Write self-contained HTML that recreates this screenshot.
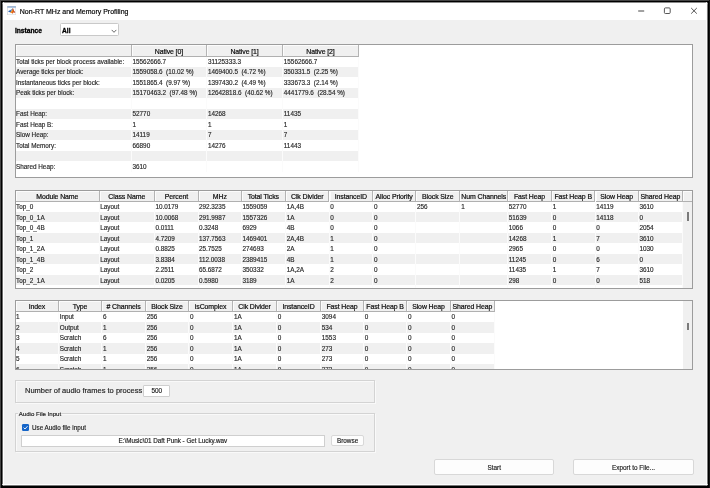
<!DOCTYPE html>
<html lang="en"><head><meta charset="utf-8"><title>Non-RT MHz and Memory Profiling</title>
<style>
html,body{margin:0;padding:0;}
body{-webkit-text-stroke:0.16px;width:710px;height:488px;background:#000;overflow:hidden;position:relative;font-family:"Liberation Sans",sans-serif;}
.win{will-change:transform;position:absolute;left:2px;top:2px;width:706px;height:484px;background:#f0f0f0;border-radius:3px;overflow:hidden;}
.edge{position:absolute;background:#fff;}
.titlebar{position:absolute;left:0;top:0;width:706px;height:18px;background:#fff;}
.title{position:absolute;left:17.8px;top:1px;height:18px;line-height:17.6px;font-size:7.0px;color:#000;white-space:nowrap;}
.abs{position:absolute;white-space:nowrap;}
.tbl{position:absolute;background:#fff;border:1px solid #9c9c9c;box-sizing:border-box;overflow:hidden;}
.tbl>*{position:absolute;}
.th{top:0;box-sizing:border-box;background:#f0f0f0;border-right:1px solid #b4b4b4;border-bottom:1px solid #b0b0b0;box-shadow:inset 1px 1px 0 #fcfcfc;font-size:6.95px;letter-spacing:-0.1px;color:#0c0c0c;-webkit-text-stroke:0.2px;text-align:center;white-space:nowrap;overflow:hidden;}
.tr{position:absolute;}
.td{position:absolute;height:9px;line-height:9px;box-sizing:border-box;font-size:6.36px;color:#2a2a2a;white-space:pre;overflow:hidden;}
.sb{background:#f0f0f0;}
.vs{width:1px;background:#fbfbfb;}
.thumb{width:2px;background:#7a7a7a;}
.panel{position:absolute;box-sizing:border-box;border:1px solid #d3d3d3;box-shadow:inset 1px 1px 0 #f9f9f9,1px 1px 0 #f9f9f9;}
.btn{position:absolute;box-sizing:border-box;background:#fdfdfd;border:1px solid #d8d8d8;border-radius:2px;font-size:6.4px;color:#222;text-align:center;white-space:nowrap;}
.edit{position:absolute;box-sizing:border-box;background:#fff;border:1px solid #cfcfcf;font-size:6.4px;color:#222;text-align:center;white-space:nowrap;}
</style></head><body>
<div class="abs" style="left:0;top:0;width:1px;height:488px;background:#444"></div>
<div class="abs" style="left:0;top:0;width:710px;height:1px;background:#444"></div>
<div class="abs" style="left:709px;top:0;width:1px;height:488px;background:#151515"></div>
<div class="win">
<div class="titlebar">
<div class="edge" style="left:0;top:0;width:706px;height:1px;background:#8a8a8a"></div>
<svg class="abs" style="left:5.2px;top:4.1px" width="9.3" height="9.3" viewBox="0 0 9.3 9.3">
<rect x="0.3" y="0.3" width="8.7" height="8.7" rx="0.4" fill="#fdfdfd" stroke="#b9bec6" stroke-width="0.6"/>
<rect x="0.4" y="0.4" width="8.5" height="1.2" fill="#7c9fca"/>
<g transform="translate(4.65 4.9) scale(1.12) translate(-4.65 -4.7)">
<path d="M1.3 5.0 L3.6 4.0 L4.7 4.9 L3.4 6.2 Z" fill="#2a63b4"/>
<path d="M3.6 4.0 L5.6 2.3 L5.9 3.3 L4.7 4.9 Z" fill="#5b9bd5"/>
<path d="M3.4 6.2 L4.7 4.9 L5.8 2.2 L6.7 4.6 L7.9 6.6 L6.6 6.0 L5.3 7.3 L4.5 6.4 Z" fill="#dd5a1c"/>
<path d="M5.8 2.3 L6.7 4.6 L7.9 6.6 L6.8 5.7 L6.2 4.2 Z" fill="#9c2a18"/>
<path d="M3.4 6.2 L4.7 4.9 L5.5 3.2 L5.3 5.6 L4.5 6.4 Z" fill="#f6a21e"/>
</g>
</svg>
<div class="title">Non-RT MHz and Memory Profiling</div>
<svg class="abs" style="left:634px;top:4px" width="64" height="11" viewBox="0 0 64 11">
<path d="M2.2 5 H8.2" stroke="#444" stroke-width="1" fill="none"/>
<rect x="28.4" y="1.9" width="5.8" height="5.6" rx="1" fill="none" stroke="#444" stroke-width="0.9"/>
<path d="M55.2 2 L60.8 7.6 M60.8 2 L55.2 7.6" stroke="#333" stroke-width="0.85" fill="none"/>
</svg>
</div>
<div class="abs" style="left:12.9px;top:23.6px;font-size:6.7px;font-weight:bold;color:#000;-webkit-text-stroke:0.3px;line-height:9px">Instance</div>
<div class="abs" style="left:58.4px;top:21.2px;width:58.4px;height:13px;box-sizing:border-box;background:#fff;border:1px solid #c9c9c9;border-radius:1.5px;"></div>
<div class="abs" style="left:60.1px;top:23.8px;font-size:6.6px;font-weight:bold;color:#000;-webkit-text-stroke:0.3px;line-height:9px">All</div>
<svg class="abs" style="left:108.8px;top:26.6px" width="6" height="5" viewBox="0 0 6 5"><path d="M0.7 0.9 L3 3.3 L5.3 0.9" stroke="#444" stroke-width="0.8" fill="none"/></svg>

<div class="tbl" style="left:13px;top:42px;width:678px;height:134px">
<div class="tr" style="top:11.40px;left:0;width:342.50px;height:10.47px;background:#fff"></div>
<span class="td" style="left:0.00px;top:12px;width:115.20px;padding-left:0px">Total ticks per block process available:</span>
<span class="td" style="left:115.20px;top:12px;width:75.40px;padding-left:1.3px">15562666.7</span>
<span class="td" style="left:190.60px;top:12px;width:75.90px;padding-left:1.3px">31125333.3</span>
<span class="td" style="left:266.50px;top:12px;width:76.00px;padding-left:1.3px">15562666.7</span>
<div class="tr" style="top:21.87px;left:0;width:342.50px;height:10.47px;background:#f0f0f0"></div>
<span class="td" style="left:0.00px;top:22px;width:115.20px;padding-left:0px">Average ticks per block:</span>
<span class="td" style="left:115.20px;top:22px;width:75.40px;padding-left:1.3px">1559058.6  (10.02 %)</span>
<span class="td" style="left:190.60px;top:22px;width:75.90px;padding-left:1.3px">1469400.5  (4.72 %)</span>
<span class="td" style="left:266.50px;top:22px;width:76.00px;padding-left:1.3px">350331.5  (2.25 %)</span>
<div class="tr" style="top:32.34px;left:0;width:342.50px;height:10.47px;background:#fff"></div>
<span class="td" style="left:0.00px;top:33px;width:115.20px;padding-left:0px">Instantaneous ticks per block:</span>
<span class="td" style="left:115.20px;top:33px;width:75.40px;padding-left:1.3px">1551865.4  (9.97 %)</span>
<span class="td" style="left:190.60px;top:33px;width:75.90px;padding-left:1.3px">1397430.2  (4.49 %)</span>
<span class="td" style="left:266.50px;top:33px;width:76.00px;padding-left:1.3px">333673.3  (2.14 %)</span>
<div class="tr" style="top:42.81px;left:0;width:342.50px;height:10.47px;background:#f0f0f0"></div>
<span class="td" style="left:0.00px;top:43px;width:115.20px;padding-left:0px">Peak ticks per block:</span>
<span class="td" style="left:115.20px;top:43px;width:75.40px;padding-left:1.3px">15170463.2  (97.48 %)</span>
<span class="td" style="left:190.60px;top:43px;width:75.90px;padding-left:1.3px">12642818.6  (40.62 %)</span>
<span class="td" style="left:266.50px;top:43px;width:76.00px;padding-left:1.3px">4441779.6  (28.54 %)</span>
<div class="tr" style="top:53.28px;left:0;width:342.50px;height:10.47px;background:#fff"></div>
<div class="tr" style="top:63.75px;left:0;width:342.50px;height:10.47px;background:#f0f0f0"></div>
<span class="td" style="left:0.00px;top:64px;width:115.20px;padding-left:0px">Fast Heap:</span>
<span class="td" style="left:115.20px;top:64px;width:75.40px;padding-left:1.3px">52770</span>
<span class="td" style="left:190.60px;top:64px;width:75.90px;padding-left:1.3px">14268</span>
<span class="td" style="left:266.50px;top:64px;width:76.00px;padding-left:1.3px">11435</span>
<div class="tr" style="top:74.22px;left:0;width:342.50px;height:10.47px;background:#fff"></div>
<span class="td" style="left:0.00px;top:75px;width:115.20px;padding-left:0px">Fast Heap B:</span>
<span class="td" style="left:115.20px;top:75px;width:75.40px;padding-left:1.3px">1</span>
<span class="td" style="left:190.60px;top:75px;width:75.90px;padding-left:1.3px">1</span>
<span class="td" style="left:266.50px;top:75px;width:76.00px;padding-left:1.3px">1</span>
<div class="tr" style="top:84.69px;left:0;width:342.50px;height:10.47px;background:#f0f0f0"></div>
<span class="td" style="left:0.00px;top:85px;width:115.20px;padding-left:0px">Slow Heap:</span>
<span class="td" style="left:115.20px;top:85px;width:75.40px;padding-left:1.3px">14119</span>
<span class="td" style="left:190.60px;top:85px;width:75.90px;padding-left:1.3px">7</span>
<span class="td" style="left:266.50px;top:85px;width:76.00px;padding-left:1.3px">7</span>
<div class="tr" style="top:95.16px;left:0;width:342.50px;height:10.47px;background:#fff"></div>
<span class="td" style="left:0.00px;top:96px;width:115.20px;padding-left:0px">Total Memory:</span>
<span class="td" style="left:115.20px;top:96px;width:75.40px;padding-left:1.3px">66890</span>
<span class="td" style="left:190.60px;top:96px;width:75.90px;padding-left:1.3px">14276</span>
<span class="td" style="left:266.50px;top:96px;width:76.00px;padding-left:1.3px">11443</span>
<div class="tr" style="top:105.63px;left:0;width:342.50px;height:10.47px;background:#f0f0f0"></div>
<div class="tr" style="top:116.10px;left:0;width:342.50px;height:10.47px;background:#fff"></div>
<span class="td" style="left:0.00px;top:117px;width:115.20px;padding-left:0px">Shared Heap:</span>
<span class="td" style="left:115.20px;top:117px;width:75.40px;padding-left:1.3px">3610</span>
<div class="vs" style="left:114.70px;top:12px;height:114.57px"></div>
<div class="vs" style="left:190.10px;top:12px;height:114.57px"></div>
<div class="vs" style="left:266.00px;top:12px;height:114.57px"></div>
<div class="vs" style="left:342.00px;top:12px;height:114.57px"></div>
<div class="th" style="left:0.00px;width:115.70px;height:12px;line-height:13.00px"></div>
<div class="th" style="left:115.70px;width:75.40px;height:12px;line-height:13.00px">Native [0]</div>
<div class="th" style="left:191.10px;width:75.90px;height:12px;line-height:13.00px">Native [1]</div>
<div class="th" style="left:267.00px;width:76.00px;height:12px;line-height:13.00px">Native [2]</div>
</div>
<div class="tbl" style="left:13px;top:188px;width:678px;height:99px">
<div class="tr" style="top:10.40px;left:0;width:666.60px;height:10.5px;background:#fff"></div>
<span class="td" style="left:0.00px;top:11px;width:83.00px;padding-left:0px">Top_0</span>
<span class="td" style="left:83.00px;top:11px;width:55.50px;padding-left:1.3px">Layout</span>
<span class="td" style="left:138.50px;top:11px;width:43.90px;padding-left:0.9px">10.0179</span>
<span class="td" style="left:182.40px;top:11px;width:42.80px;padding-left:0.5px">292.3235</span>
<span class="td" style="left:225.20px;top:11px;width:44.20px;padding-left:1.3px">1559059</span>
<span class="td" style="left:269.40px;top:11px;width:43.60px;padding-left:1.3px">1A,4B</span>
<span class="td" style="left:313.00px;top:11px;width:43.70px;padding-left:1.3px">0</span>
<span class="td" style="left:356.70px;top:11px;width:42.90px;padding-left:1.3px">0</span>
<span class="td" style="left:399.60px;top:11px;width:44.30px;padding-left:1.3px">256</span>
<span class="td" style="left:443.90px;top:11px;width:47.60px;padding-left:1.3px">1</span>
<span class="td" style="left:491.50px;top:11px;width:43.90px;padding-left:1.3px">52770</span>
<span class="td" style="left:535.40px;top:11px;width:43.60px;padding-left:1.3px">1</span>
<span class="td" style="left:579.00px;top:11px;width:43.20px;padding-left:1.3px">14119</span>
<span class="td" style="left:622.20px;top:11px;width:44.40px;padding-left:1.3px">3610</span>
<div class="tr" style="top:20.90px;left:0;width:666.60px;height:10.5px;background:#f0f0f0"></div>
<span class="td" style="left:0.00px;top:22px;width:83.00px;padding-left:0px">Top_0_1A</span>
<span class="td" style="left:83.00px;top:22px;width:55.50px;padding-left:1.3px">Layout</span>
<span class="td" style="left:138.50px;top:22px;width:43.90px;padding-left:0.9px">10.0068</span>
<span class="td" style="left:182.40px;top:22px;width:42.80px;padding-left:0.5px">291.9987</span>
<span class="td" style="left:225.20px;top:22px;width:44.20px;padding-left:1.3px">1557326</span>
<span class="td" style="left:269.40px;top:22px;width:43.60px;padding-left:1.3px">1A</span>
<span class="td" style="left:313.00px;top:22px;width:43.70px;padding-left:1.3px">0</span>
<span class="td" style="left:356.70px;top:22px;width:42.90px;padding-left:1.3px">0</span>
<span class="td" style="left:491.50px;top:22px;width:43.90px;padding-left:1.3px">51639</span>
<span class="td" style="left:535.40px;top:22px;width:43.60px;padding-left:1.3px">0</span>
<span class="td" style="left:579.00px;top:22px;width:43.20px;padding-left:1.3px">14118</span>
<span class="td" style="left:622.20px;top:22px;width:44.40px;padding-left:1.3px">0</span>
<div class="tr" style="top:31.40px;left:0;width:666.60px;height:10.5px;background:#fff"></div>
<span class="td" style="left:0.00px;top:32px;width:83.00px;padding-left:0px">Top_0_4B</span>
<span class="td" style="left:83.00px;top:32px;width:55.50px;padding-left:1.3px">Layout</span>
<span class="td" style="left:138.50px;top:32px;width:43.90px;padding-left:0.9px">0.0111</span>
<span class="td" style="left:182.40px;top:32px;width:42.80px;padding-left:0.5px">0.3248</span>
<span class="td" style="left:225.20px;top:32px;width:44.20px;padding-left:1.3px">6929</span>
<span class="td" style="left:269.40px;top:32px;width:43.60px;padding-left:1.3px">4B</span>
<span class="td" style="left:313.00px;top:32px;width:43.70px;padding-left:1.3px">0</span>
<span class="td" style="left:356.70px;top:32px;width:42.90px;padding-left:1.3px">0</span>
<span class="td" style="left:491.50px;top:32px;width:43.90px;padding-left:1.3px">1066</span>
<span class="td" style="left:535.40px;top:32px;width:43.60px;padding-left:1.3px">0</span>
<span class="td" style="left:579.00px;top:32px;width:43.20px;padding-left:1.3px">0</span>
<span class="td" style="left:622.20px;top:32px;width:44.40px;padding-left:1.3px">2054</span>
<div class="tr" style="top:41.90px;left:0;width:666.60px;height:10.5px;background:#f0f0f0"></div>
<span class="td" style="left:0.00px;top:43px;width:83.00px;padding-left:0px">Top_1</span>
<span class="td" style="left:83.00px;top:43px;width:55.50px;padding-left:1.3px">Layout</span>
<span class="td" style="left:138.50px;top:43px;width:43.90px;padding-left:0.9px">4.7209</span>
<span class="td" style="left:182.40px;top:43px;width:42.80px;padding-left:0.5px">137.7563</span>
<span class="td" style="left:225.20px;top:43px;width:44.20px;padding-left:1.3px">1469401</span>
<span class="td" style="left:269.40px;top:43px;width:43.60px;padding-left:1.3px">2A,4B</span>
<span class="td" style="left:313.00px;top:43px;width:43.70px;padding-left:1.3px">1</span>
<span class="td" style="left:356.70px;top:43px;width:42.90px;padding-left:1.3px">0</span>
<span class="td" style="left:491.50px;top:43px;width:43.90px;padding-left:1.3px">14268</span>
<span class="td" style="left:535.40px;top:43px;width:43.60px;padding-left:1.3px">1</span>
<span class="td" style="left:579.00px;top:43px;width:43.20px;padding-left:1.3px">7</span>
<span class="td" style="left:622.20px;top:43px;width:44.40px;padding-left:1.3px">3610</span>
<div class="tr" style="top:52.40px;left:0;width:666.60px;height:10.5px;background:#fff"></div>
<span class="td" style="left:0.00px;top:53px;width:83.00px;padding-left:0px">Top_1_2A</span>
<span class="td" style="left:83.00px;top:53px;width:55.50px;padding-left:1.3px">Layout</span>
<span class="td" style="left:138.50px;top:53px;width:43.90px;padding-left:0.9px">0.8825</span>
<span class="td" style="left:182.40px;top:53px;width:42.80px;padding-left:0.5px">25.7525</span>
<span class="td" style="left:225.20px;top:53px;width:44.20px;padding-left:1.3px">274693</span>
<span class="td" style="left:269.40px;top:53px;width:43.60px;padding-left:1.3px">2A</span>
<span class="td" style="left:313.00px;top:53px;width:43.70px;padding-left:1.3px">1</span>
<span class="td" style="left:356.70px;top:53px;width:42.90px;padding-left:1.3px">0</span>
<span class="td" style="left:491.50px;top:53px;width:43.90px;padding-left:1.3px">2965</span>
<span class="td" style="left:535.40px;top:53px;width:43.60px;padding-left:1.3px">0</span>
<span class="td" style="left:579.00px;top:53px;width:43.20px;padding-left:1.3px">0</span>
<span class="td" style="left:622.20px;top:53px;width:44.40px;padding-left:1.3px">1030</span>
<div class="tr" style="top:62.90px;left:0;width:666.60px;height:10.5px;background:#f0f0f0"></div>
<span class="td" style="left:0.00px;top:64px;width:83.00px;padding-left:0px">Top_1_4B</span>
<span class="td" style="left:83.00px;top:64px;width:55.50px;padding-left:1.3px">Layout</span>
<span class="td" style="left:138.50px;top:64px;width:43.90px;padding-left:0.9px">3.8384</span>
<span class="td" style="left:182.40px;top:64px;width:42.80px;padding-left:0.5px">112.0038</span>
<span class="td" style="left:225.20px;top:64px;width:44.20px;padding-left:1.3px">2389415</span>
<span class="td" style="left:269.40px;top:64px;width:43.60px;padding-left:1.3px">4B</span>
<span class="td" style="left:313.00px;top:64px;width:43.70px;padding-left:1.3px">1</span>
<span class="td" style="left:356.70px;top:64px;width:42.90px;padding-left:1.3px">0</span>
<span class="td" style="left:491.50px;top:64px;width:43.90px;padding-left:1.3px">11245</span>
<span class="td" style="left:535.40px;top:64px;width:43.60px;padding-left:1.3px">0</span>
<span class="td" style="left:579.00px;top:64px;width:43.20px;padding-left:1.3px">6</span>
<span class="td" style="left:622.20px;top:64px;width:44.40px;padding-left:1.3px">0</span>
<div class="tr" style="top:73.40px;left:0;width:666.60px;height:10.5px;background:#fff"></div>
<span class="td" style="left:0.00px;top:74px;width:83.00px;padding-left:0px">Top_2</span>
<span class="td" style="left:83.00px;top:74px;width:55.50px;padding-left:1.3px">Layout</span>
<span class="td" style="left:138.50px;top:74px;width:43.90px;padding-left:0.9px">2.2511</span>
<span class="td" style="left:182.40px;top:74px;width:42.80px;padding-left:0.5px">65.6872</span>
<span class="td" style="left:225.20px;top:74px;width:44.20px;padding-left:1.3px">350332</span>
<span class="td" style="left:269.40px;top:74px;width:43.60px;padding-left:1.3px">1A,2A</span>
<span class="td" style="left:313.00px;top:74px;width:43.70px;padding-left:1.3px">2</span>
<span class="td" style="left:356.70px;top:74px;width:42.90px;padding-left:1.3px">0</span>
<span class="td" style="left:491.50px;top:74px;width:43.90px;padding-left:1.3px">11435</span>
<span class="td" style="left:535.40px;top:74px;width:43.60px;padding-left:1.3px">1</span>
<span class="td" style="left:579.00px;top:74px;width:43.20px;padding-left:1.3px">7</span>
<span class="td" style="left:622.20px;top:74px;width:44.40px;padding-left:1.3px">3610</span>
<div class="tr" style="top:83.90px;left:0;width:666.60px;height:10.5px;background:#f0f0f0"></div>
<span class="td" style="left:0.00px;top:85px;width:83.00px;padding-left:0px">Top_2_1A</span>
<span class="td" style="left:83.00px;top:85px;width:55.50px;padding-left:1.3px">Layout</span>
<span class="td" style="left:138.50px;top:85px;width:43.90px;padding-left:0.9px">0.0205</span>
<span class="td" style="left:182.40px;top:85px;width:42.80px;padding-left:0.5px">0.5980</span>
<span class="td" style="left:225.20px;top:85px;width:44.20px;padding-left:1.3px">3189</span>
<span class="td" style="left:269.40px;top:85px;width:43.60px;padding-left:1.3px">1A</span>
<span class="td" style="left:313.00px;top:85px;width:43.70px;padding-left:1.3px">2</span>
<span class="td" style="left:356.70px;top:85px;width:42.90px;padding-left:1.3px">0</span>
<span class="td" style="left:491.50px;top:85px;width:43.90px;padding-left:1.3px">298</span>
<span class="td" style="left:535.40px;top:85px;width:43.60px;padding-left:1.3px">0</span>
<span class="td" style="left:579.00px;top:85px;width:43.20px;padding-left:1.3px">0</span>
<span class="td" style="left:622.20px;top:85px;width:44.40px;padding-left:1.3px">518</span>
<div class="tr" style="top:94.40px;left:0;width:666.60px;height:10.5px;background:#fff"></div>
<div class="vs" style="left:82.50px;top:11px;height:93.90px"></div>
<div class="vs" style="left:138.00px;top:11px;height:93.90px"></div>
<div class="vs" style="left:181.90px;top:11px;height:93.90px"></div>
<div class="vs" style="left:224.70px;top:11px;height:93.90px"></div>
<div class="vs" style="left:268.90px;top:11px;height:93.90px"></div>
<div class="vs" style="left:312.50px;top:11px;height:93.90px"></div>
<div class="vs" style="left:356.20px;top:11px;height:93.90px"></div>
<div class="vs" style="left:399.10px;top:11px;height:93.90px"></div>
<div class="vs" style="left:443.40px;top:11px;height:93.90px"></div>
<div class="vs" style="left:491.00px;top:11px;height:93.90px"></div>
<div class="vs" style="left:534.90px;top:11px;height:93.90px"></div>
<div class="vs" style="left:578.50px;top:11px;height:93.90px"></div>
<div class="vs" style="left:621.70px;top:11px;height:93.90px"></div>
<div class="vs" style="left:666.10px;top:11px;height:93.90px"></div>
<div class="th" style="left:0.00px;width:83.50px;height:11px;line-height:12.00px">Module Name</div>
<div class="th" style="left:83.50px;width:55.50px;height:11px;line-height:12.00px">Class Name</div>
<div class="th" style="left:139.00px;width:43.90px;height:11px;line-height:12.00px">Percent</div>
<div class="th" style="left:182.90px;width:42.80px;height:11px;line-height:12.00px">MHz</div>
<div class="th" style="left:225.70px;width:44.20px;height:11px;line-height:12.00px">Total Ticks</div>
<div class="th" style="left:269.90px;width:43.60px;height:11px;line-height:12.00px">Clk Divider</div>
<div class="th" style="left:313.50px;width:43.70px;height:11px;line-height:12.00px">InstanceID</div>
<div class="th" style="left:357.20px;width:42.90px;height:11px;line-height:12.00px">Alloc Priority</div>
<div class="th" style="left:400.10px;width:44.30px;height:11px;line-height:12.00px">Block Size</div>
<div class="th" style="left:444.40px;width:47.60px;height:11px;line-height:12.00px">Num Channels</div>
<div class="th" style="left:492.00px;width:43.90px;height:11px;line-height:12.00px">Fast Heap</div>
<div class="th" style="left:535.90px;width:43.60px;height:11px;line-height:12.00px">Fast Heap B</div>
<div class="th" style="left:579.50px;width:43.20px;height:11px;line-height:12.00px">Slow Heap</div>
<div class="th" style="left:622.70px;width:44.40px;height:11px;line-height:12.00px">Shared Heap</div>
<div class="th" style="left:667.10px;width:8.90px;height:11px;border-right:none"></div>
<div class="sb" style="left:666.60px;top:11.00px;width:9.40px;bottom:0"></div>
<div class="thumb" style="left:670.80px;top:20.80px;height:9.00px"></div>
</div>
<div class="tbl" style="left:13px;top:298px;width:678px;height:70px">
<div class="tr" style="top:10.50px;left:0;width:478.40px;height:10.5px;background:#fff"></div>
<span class="td" style="left:0.00px;top:11px;width:42.40px;padding-left:0px">1</span>
<span class="td" style="left:42.40px;top:11px;width:43.30px;padding-left:1.3px">Input</span>
<span class="td" style="left:85.70px;top:11px;width:43.70px;padding-left:1.3px">6</span>
<span class="td" style="left:129.40px;top:11px;width:43.20px;padding-left:1.3px">256</span>
<span class="td" style="left:172.60px;top:11px;width:44.00px;padding-left:1.3px">0</span>
<span class="td" style="left:216.60px;top:11px;width:43.90px;padding-left:1.3px">1A</span>
<span class="td" style="left:260.50px;top:11px;width:44.00px;padding-left:1.3px">0</span>
<span class="td" style="left:304.50px;top:11px;width:42.90px;padding-left:1.3px">3094</span>
<span class="td" style="left:347.40px;top:11px;width:43.30px;padding-left:1.3px">0</span>
<span class="td" style="left:390.70px;top:11px;width:43.60px;padding-left:1.3px">0</span>
<span class="td" style="left:434.30px;top:11px;width:44.10px;padding-left:1.3px">0</span>
<div class="tr" style="top:21.00px;left:0;width:478.40px;height:10.5px;background:#f0f0f0"></div>
<span class="td" style="left:0.00px;top:22px;width:42.40px;padding-left:0px">2</span>
<span class="td" style="left:42.40px;top:22px;width:43.30px;padding-left:1.3px">Output</span>
<span class="td" style="left:85.70px;top:22px;width:43.70px;padding-left:1.3px">1</span>
<span class="td" style="left:129.40px;top:22px;width:43.20px;padding-left:1.3px">256</span>
<span class="td" style="left:172.60px;top:22px;width:44.00px;padding-left:1.3px">0</span>
<span class="td" style="left:216.60px;top:22px;width:43.90px;padding-left:1.3px">1A</span>
<span class="td" style="left:260.50px;top:22px;width:44.00px;padding-left:1.3px">0</span>
<span class="td" style="left:304.50px;top:22px;width:42.90px;padding-left:1.3px">534</span>
<span class="td" style="left:347.40px;top:22px;width:43.30px;padding-left:1.3px">0</span>
<span class="td" style="left:390.70px;top:22px;width:43.60px;padding-left:1.3px">0</span>
<span class="td" style="left:434.30px;top:22px;width:44.10px;padding-left:1.3px">0</span>
<div class="tr" style="top:31.50px;left:0;width:478.40px;height:10.5px;background:#fff"></div>
<span class="td" style="left:0.00px;top:32px;width:42.40px;padding-left:0px">3</span>
<span class="td" style="left:42.40px;top:32px;width:43.30px;padding-left:1.3px">Scratch</span>
<span class="td" style="left:85.70px;top:32px;width:43.70px;padding-left:1.3px">6</span>
<span class="td" style="left:129.40px;top:32px;width:43.20px;padding-left:1.3px">256</span>
<span class="td" style="left:172.60px;top:32px;width:44.00px;padding-left:1.3px">0</span>
<span class="td" style="left:216.60px;top:32px;width:43.90px;padding-left:1.3px">1A</span>
<span class="td" style="left:260.50px;top:32px;width:44.00px;padding-left:1.3px">0</span>
<span class="td" style="left:304.50px;top:32px;width:42.90px;padding-left:1.3px">1553</span>
<span class="td" style="left:347.40px;top:32px;width:43.30px;padding-left:1.3px">0</span>
<span class="td" style="left:390.70px;top:32px;width:43.60px;padding-left:1.3px">0</span>
<span class="td" style="left:434.30px;top:32px;width:44.10px;padding-left:1.3px">0</span>
<div class="tr" style="top:42.00px;left:0;width:478.40px;height:10.5px;background:#f0f0f0"></div>
<span class="td" style="left:0.00px;top:43px;width:42.40px;padding-left:0px">4</span>
<span class="td" style="left:42.40px;top:43px;width:43.30px;padding-left:1.3px">Scratch</span>
<span class="td" style="left:85.70px;top:43px;width:43.70px;padding-left:1.3px">1</span>
<span class="td" style="left:129.40px;top:43px;width:43.20px;padding-left:1.3px">256</span>
<span class="td" style="left:172.60px;top:43px;width:44.00px;padding-left:1.3px">0</span>
<span class="td" style="left:216.60px;top:43px;width:43.90px;padding-left:1.3px">1A</span>
<span class="td" style="left:260.50px;top:43px;width:44.00px;padding-left:1.3px">0</span>
<span class="td" style="left:304.50px;top:43px;width:42.90px;padding-left:1.3px">273</span>
<span class="td" style="left:347.40px;top:43px;width:43.30px;padding-left:1.3px">0</span>
<span class="td" style="left:390.70px;top:43px;width:43.60px;padding-left:1.3px">0</span>
<span class="td" style="left:434.30px;top:43px;width:44.10px;padding-left:1.3px">0</span>
<div class="tr" style="top:52.50px;left:0;width:478.40px;height:10.5px;background:#fff"></div>
<span class="td" style="left:0.00px;top:53px;width:42.40px;padding-left:0px">5</span>
<span class="td" style="left:42.40px;top:53px;width:43.30px;padding-left:1.3px">Scratch</span>
<span class="td" style="left:85.70px;top:53px;width:43.70px;padding-left:1.3px">1</span>
<span class="td" style="left:129.40px;top:53px;width:43.20px;padding-left:1.3px">256</span>
<span class="td" style="left:172.60px;top:53px;width:44.00px;padding-left:1.3px">0</span>
<span class="td" style="left:216.60px;top:53px;width:43.90px;padding-left:1.3px">1A</span>
<span class="td" style="left:260.50px;top:53px;width:44.00px;padding-left:1.3px">0</span>
<span class="td" style="left:304.50px;top:53px;width:42.90px;padding-left:1.3px">273</span>
<span class="td" style="left:347.40px;top:53px;width:43.30px;padding-left:1.3px">0</span>
<span class="td" style="left:390.70px;top:53px;width:43.60px;padding-left:1.3px">0</span>
<span class="td" style="left:434.30px;top:53px;width:44.10px;padding-left:1.3px">0</span>
<div class="tr" style="top:63.00px;left:0;width:478.40px;height:10.5px;background:#f0f0f0"></div>
<span class="td" style="left:0.00px;top:64px;width:42.40px;padding-left:0px">6</span>
<span class="td" style="left:42.40px;top:64px;width:43.30px;padding-left:1.3px">Scratch</span>
<span class="td" style="left:85.70px;top:64px;width:43.70px;padding-left:1.3px">1</span>
<span class="td" style="left:129.40px;top:64px;width:43.20px;padding-left:1.3px">256</span>
<span class="td" style="left:172.60px;top:64px;width:44.00px;padding-left:1.3px">0</span>
<span class="td" style="left:216.60px;top:64px;width:43.90px;padding-left:1.3px">1A</span>
<span class="td" style="left:260.50px;top:64px;width:44.00px;padding-left:1.3px">0</span>
<span class="td" style="left:304.50px;top:64px;width:42.90px;padding-left:1.3px">273</span>
<span class="td" style="left:347.40px;top:64px;width:43.30px;padding-left:1.3px">0</span>
<span class="td" style="left:390.70px;top:64px;width:43.60px;padding-left:1.3px">0</span>
<span class="td" style="left:434.30px;top:64px;width:44.10px;padding-left:1.3px">0</span>
<div class="vs" style="left:41.90px;top:11px;height:62.50px"></div>
<div class="vs" style="left:85.20px;top:11px;height:62.50px"></div>
<div class="vs" style="left:128.90px;top:11px;height:62.50px"></div>
<div class="vs" style="left:172.10px;top:11px;height:62.50px"></div>
<div class="vs" style="left:216.10px;top:11px;height:62.50px"></div>
<div class="vs" style="left:260.00px;top:11px;height:62.50px"></div>
<div class="vs" style="left:304.00px;top:11px;height:62.50px"></div>
<div class="vs" style="left:346.90px;top:11px;height:62.50px"></div>
<div class="vs" style="left:390.20px;top:11px;height:62.50px"></div>
<div class="vs" style="left:433.80px;top:11px;height:62.50px"></div>
<div class="vs" style="left:477.90px;top:11px;height:62.50px"></div>
<div class="th" style="left:0.00px;width:42.90px;height:11px;line-height:12.00px">Index</div>
<div class="th" style="left:42.90px;width:43.30px;height:11px;line-height:12.00px">Type</div>
<div class="th" style="left:86.20px;width:43.70px;height:11px;line-height:12.00px"># Channels</div>
<div class="th" style="left:129.90px;width:43.20px;height:11px;line-height:12.00px">Block Size</div>
<div class="th" style="left:173.10px;width:44.00px;height:11px;line-height:12.00px">isComplex</div>
<div class="th" style="left:217.10px;width:43.90px;height:11px;line-height:12.00px">Clk Divider</div>
<div class="th" style="left:261.00px;width:44.00px;height:11px;line-height:12.00px">InstanceID</div>
<div class="th" style="left:305.00px;width:42.90px;height:11px;line-height:12.00px">Fast Heap</div>
<div class="th" style="left:347.90px;width:43.30px;height:11px;line-height:12.00px">Fast Heap B</div>
<div class="th" style="left:391.20px;width:43.60px;height:11px;line-height:12.00px">Slow Heap</div>
<div class="th" style="left:434.80px;width:44.10px;height:11px;line-height:12.00px">Shared Heap</div>
<div class="sb" style="left:666.60px;top:0.00px;width:9.40px;bottom:0"></div>
<div class="thumb" style="left:670.80px;top:22.00px;height:7.00px"></div>
</div>

<div class="panel" style="left:13px;top:378.4px;width:360px;height:22.2px"></div>
<div class="abs" style="left:23px;top:383.9px;font-size:7.5px;color:#1e1e1e;line-height:10px">Number of audio frames to process</div>
<div class="edit" style="left:141.4px;top:383.4px;width:26.8px;height:11.6px;line-height:9.4px;border-radius:1px;font-size:6.4px">500</div>

<div class="panel" style="left:13px;top:411px;width:360px;height:39px"></div>
<div class="abs" style="left:15.6px;top:406.6px;padding:0 1.2px;background:#f0f0f0;font-size:6.1px;color:#222;line-height:9px">Audio File Input</div>
<div class="abs" style="left:20.2px;top:422.2px;width:7px;height:7px;background:#1565c8;border-radius:1.2px"></div>
<svg class="abs" style="left:20.2px;top:422.2px" width="7" height="7" viewBox="0 0 7 7"><path d="M1.6 3.6 L3 5 L5.5 2.2" stroke="#fff" stroke-width="0.9" fill="none"/></svg>
<div class="abs" style="left:30px;top:421.2px;font-size:6.3px;color:#222;line-height:9px">Use Audio file input</div>
<div class="edit" style="left:19.2px;top:433px;width:303.4px;height:11.6px;line-height:10.6px;font-size:6.3px">E:\Music\01 Daft Punk - Get Lucky.wav</div>
<div class="btn" style="left:329.2px;top:433.4px;width:32.8px;height:10.2px;line-height:9.6px">Browse</div>

<div class="btn" style="left:432.3px;top:456.8px;width:119.8px;height:16px;line-height:15.6px">Start</div>
<div class="btn" style="left:571.2px;top:456.8px;width:120.6px;height:16px;line-height:15.6px">Export to File...</div>
<div class="edge" style="left:0;top:0;width:1px;height:484px;background:#6a6a6a"></div>
<div class="edge" style="left:1px;top:0;width:1px;height:484px"></div>
<div class="edge" style="left:704px;top:0;width:1px;height:484px;background:#fafafa"></div>
<div class="edge" style="left:705px;top:0;width:1px;height:484px;background:#777"></div>
<div class="edge" style="left:0;top:482px;width:706px;height:1px"></div>
<div class="edge" style="left:0;top:483px;width:706px;height:1px;background:#777"></div>
</div>
</body></html>
